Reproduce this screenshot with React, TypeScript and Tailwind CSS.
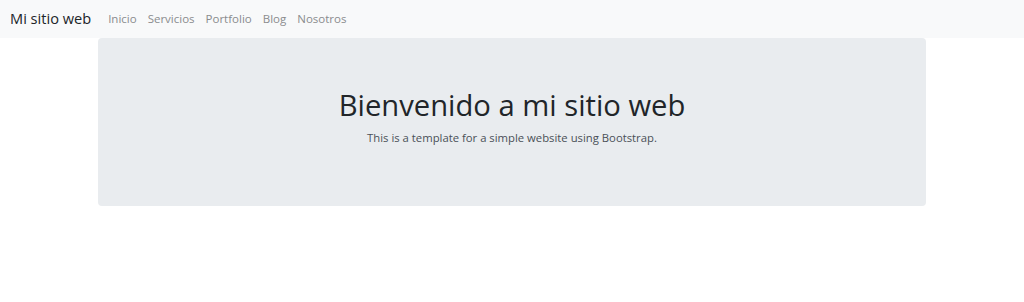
export default function App() {
  const links = ["Inicio", "Servicios", "Portfolio", "Blog", "Nosotros"];
  return (
    <div className="min-h-[302px] bg-white" style={{ fontFamily: '"Open Sans", "Noto Sans", sans-serif' }}>
      <nav className="h-[38px] bg-[#f8f9fa] flex items-center pl-[10px]">
        <span className="text-[14.6px] text-[#212529] mr-[17px]">Mi sitio web</span>
        <div className="flex gap-[11px]">
          {links.map((l) => (
            <span key={l} className="text-[11.5px] text-[#8a8c8e]">{l}</span>
          ))}
        </div>
      </nav>
      <div className="w-[828px] mx-auto h-[168px] bg-[#e9ecef] rounded-[4px] flex flex-col items-center pt-[47px]">
        <h1 className="text-[29.2px] leading-[40px] text-[#212529] font-normal">Bienvenido a mi sitio web</h1>
        <p className="text-[11.3px] leading-[18px] text-[#495057] mt-[4px]">This is a template for a simple website using Bootstrap.</p>
      </div>
    </div>
  );
}
